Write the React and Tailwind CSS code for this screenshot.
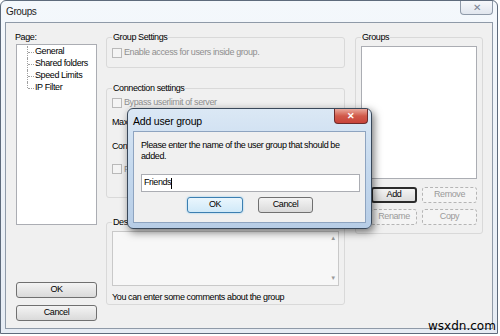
import React from "react";

const ui = { fontFamily: '"Liberation Sans", Arial, sans-serif' };

const Check = ({ label, disabled = true }) => (
  <div className="flex items-center gap-[2px] whitespace-nowrap">
    <span className="w-[10px] h-[10px] shrink-0 border border-[#b9b9b9] bg-[#f4f4f4]" />
    <span className={disabled ? "text-[#8f8f8f]" : "text-black"}>{label}</span>
  </div>
);

const WinButton = ({ children, className = "", disabled = false, variant = "normal" }) => {
  const look =
    variant === "default"
      ? "border-[2px] border-[#2b2b2b] bg-gradient-to-b from-[#f4f4f4] to-[#dcdcdc] text-black"
      : variant === "focus"
      ? "border border-[#3c7fb1] shadow-[0_0_2px_#7fc3ea] bg-gradient-to-b from-[#eaf6fd] to-[#d0e9f8] text-black"
      : disabled
      ? "border border-[#b5b5b5] border-dashed bg-[#f4f4f4] text-[#9a9a9a]"
      : "border border-[#707070] bg-gradient-to-b from-[#f4f4f4] to-[#dadada] text-black";
  return (
    <div className={`flex items-center justify-center rounded-[3px] whitespace-nowrap ${look} ${className}`}>
      {children}
    </div>
  );
};

const Group = ({ title, className = "", children }) => (
  <fieldset className={`border border-[#d9d9d9] rounded-[3px] px-[5px] ${className}`}>
    <legend className="px-[1px] leading-[12px] text-black">{title}</legend>
    {children}
  </fieldset>
);

function TreeItem({ label, last }) {
  return (
    <div className="flex items-center h-[12px] relative whitespace-nowrap">
      <span
        className={`absolute left-[10px] top-0 w-0 border-l border-dotted border-[#a0a0a0] ${
          last ? "h-[6px]" : "h-[12px]"
        }`}
      />
      <span className="ml-[11px] w-[6px] border-t border-dotted border-[#a0a0a0]" />
      <span className="ml-[1px]">{label}</span>
    </div>
  );
}

export default function App() {
  return (
    <div
      className="relative w-[500px] h-[336px] overflow-hidden bg-white text-[9px] tracking-[-0.4px] text-black"
      style={ui}
    >
      <div className="w-[498px] h-[334px] bg-gradient-to-b from-[#f4f8fc] to-[#e6ecf4] border border-[#5e6b7c] rounded-t-[6px] flex flex-col">
        {/* title bar */}
        <div className="h-[21px] flex items-start shrink-0">
          <span className="ml-[5px] mt-[5px] text-[10px] leading-[12px] text-[#1e1e1e]">Groups</span>
          <div className="ml-auto mr-[4px] w-[33px] h-[14px] rounded-b-[4px] border border-t-0 border-[#8e99a8] bg-gradient-to-b from-[#f6f8fb] to-[#e1e6ee] flex items-center justify-center text-[#7a8494] text-[10px] leading-none">
            ✕
          </div>
        </div>

        {/* client area */}
        <div className="mx-[4px] mb-[4px] flex-1 bg-[#f0f0f0] border border-[#8f9aa8] flex px-[9px] pt-[8px]">
          {/* left column */}
          <div className="w-[83px] flex flex-col">
            <div className="leading-[12px] h-[13px]">Page:</div>
            <div className="ml-[1px] h-[181px] bg-white border border-[#abadb3] pt-[1px]">
              <TreeItem label="General" />
              <TreeItem label="Shared folders" />
              <TreeItem label="Speed Limits" />
              <TreeItem label="IP Filter" last />
            </div>
            <WinButton className="ml-[1px] mt-[57px] h-[16px] w-[81px]">OK</WinButton>
            <WinButton className="ml-[1px] mt-[7px] h-[16px] w-[81px]">Cancel</WinButton>
          </div>

          {/* middle column */}
          <div className="ml-[9px] w-[241px] flex flex-col">
            <Group title="Group Settings" className="h-[37px] pt-[3px]">
              <Check label="Enable access for users inside group." />
            </Group>
            <Group title="Connection settings" className="mt-[14px] h-[116px] pt-[2px]">
              <Check label="Bypass userlimit of server" />
              <div className="mt-[6px] leading-[12px] whitespace-nowrap">Maximum connection count:</div>
              <div className="mt-[12px] leading-[12px] whitespace-nowrap">Connection limit per IP:</div>
              <div className="mt-[11px]">
                <Check label="Force SSL for user login" />
              </div>
            </Group>
            <Group title="Description" className="mt-[18px] h-[89px] pt-[3px]">
              <div className="w-[227px] h-[55px] bg-[#f7f7f7] border border-[#c9c9c9] flex">
                <div className="flex-1" />
                <div className="w-[10px] flex flex-col justify-between items-center text-[6px] text-[#9a9a9a] py-[2px]">
                  <span>▲</span>
                  <span>▼</span>
                </div>
              </div>
              <div className="mt-[5px] leading-[12px] whitespace-nowrap">You can enter some comments about the group</div>
            </Group>
          </div>

          {/* right column */}
          <div className="ml-[10px] w-[128px] flex flex-col">
            <Group title="Groups" className="h-[203px] pt-[3px]">
              <div className="w-[116px] h-[133px] bg-white border border-[#abadb3]" />
              <div className="mt-[8px] ml-[10px] flex gap-[5px]">
                <WinButton variant="default" className="w-[46px] h-[16px]">Add</WinButton>
                <WinButton disabled className="w-[55px] h-[16px]">Remove</WinButton>
              </div>
              <div className="mt-[6px] ml-[10px] flex gap-[5px]">
                <WinButton disabled className="w-[46px] h-[16px]">Rename</WinButton>
                <WinButton disabled className="w-[55px] h-[16px]">Copy</WinButton>
              </div>
            </Group>
          </div>
        </div>
      </div>

      {/* Add user group dialog */}
      <div className="absolute left-[127px] top-[108px] w-[245px] h-[121px] rounded-[6px] border border-[#39485a] bg-gradient-to-b from-[#dbe8f5] via-[#c5d9ee] to-[#b7cde6] shadow-[2px_3px_8px_rgba(0,0,0,0.55)] flex flex-col">
        <div className="h-[22px] flex items-start shrink-0">
          <span className="ml-[5px] mt-[6px] text-[10.5px] tracking-[-0.2px] leading-[12px] text-black">Add user group</span>
          <div className="ml-auto mr-[3px] w-[34px] h-[15px] rounded-b-[4px] border border-t-0 border-[#6d2b2b] bg-gradient-to-b from-[#e9a89c] via-[#d0594a] to-[#c8433a] flex items-center justify-center text-white text-[9px] font-bold leading-none">
            ✕
          </div>
        </div>
        <div className="mx-[5px] mb-[5px] flex-1 bg-[#f0f0f0] border border-[#8ea4c0] px-[7px] pt-[8px]">
          <div className="leading-[11px] whitespace-nowrap">
            Please enter the name of the user group that should be
            <br />
            added.
          </div>
          <div className="mt-[12px] h-[18px] w-[219px] bg-white border border-[#abadb3] flex items-center px-[2px]">
            <span>Friends</span>
            <span className="w-px h-[11px] bg-black" />
          </div>
          <div className="mt-[5px] flex gap-[15px] ml-[46px]">
            <WinButton variant="focus" className="w-[56px] h-[16px]">OK</WinButton>
            <WinButton className="w-[55px] h-[16px]">Cancel</WinButton>
          </div>
        </div>
      </div>

      {/* watermark */}
      <div
        className="absolute left-[428px] top-[319px] text-[12px] leading-[15px] tracking-normal text-black"
        style={{ fontFamily: '"DejaVu Sans", sans-serif' }}
      >
        wsxdn.com
      </div>
    </div>
  );
}
